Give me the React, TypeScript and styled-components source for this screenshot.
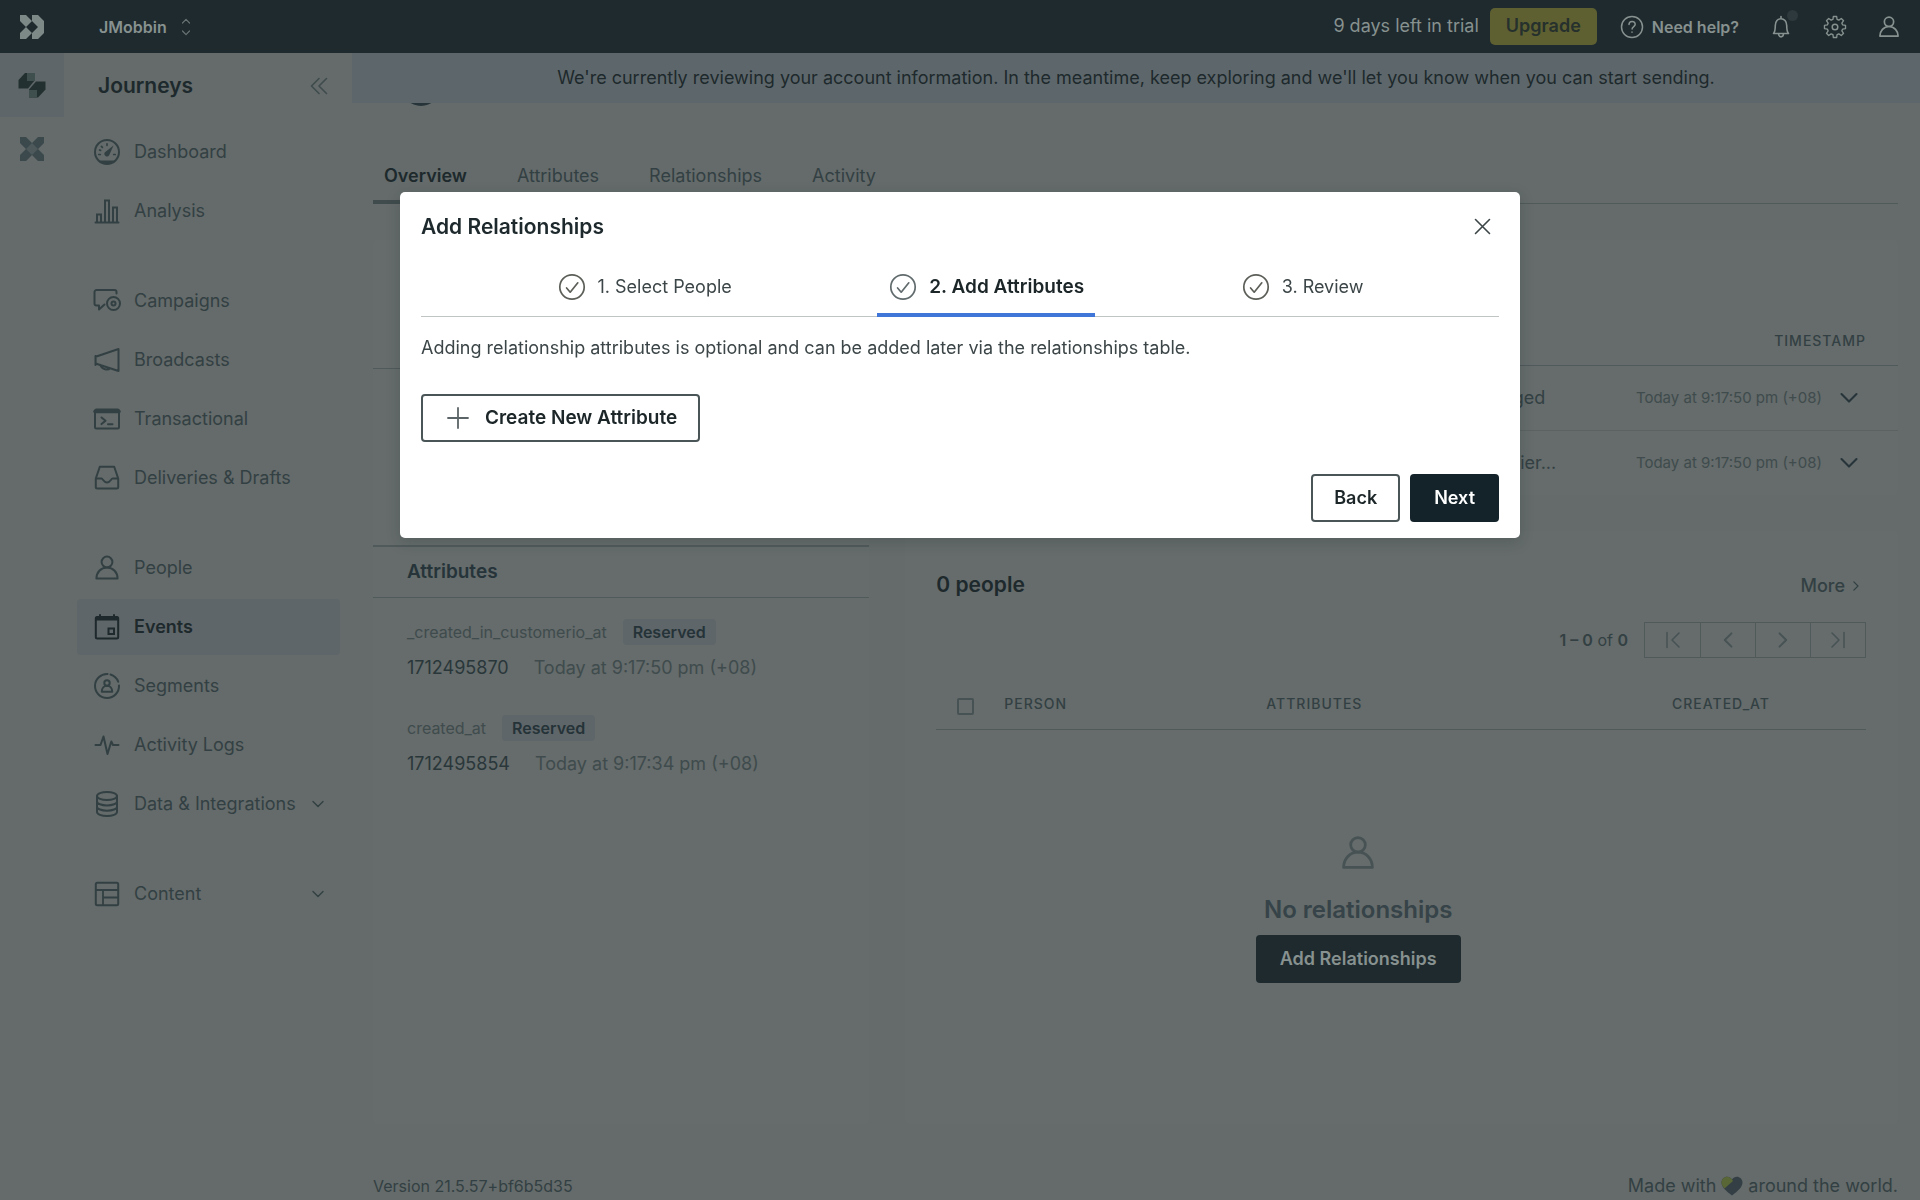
import React from "react";
import styled, { createGlobalStyle, css } from "styled-components";

const c = {
  page: "#646b6a",
  card: "#656c6b",
  selected: "#5f6669",
  banner: "#5d676b",
  bar: "#1e2a2e",
  barText: "#87918f",
  strong: "#1d292c",
  text: "#334043",
  muted: "#3f4b4d",
  faint: "#475254",
  line: "#515a5a",
  softLine: "#5b6362",
  ink: "#14232a",
  body: "#3c4547",
  blue: "#3f76d8",
};

const Global = createGlobalStyle`
  *, *::before, *::after { box-sizing: border-box; }
  body { margin: 0; background: ${c.page}; color: ${c.text};
    font-family: Inter, "Liberation Sans", sans-serif; font-size: 18px; line-height: 28px; }
  button { font: inherit; color: inherit; background: none; border: 0; padding: 0; margin: 0; }
  a { color: inherit; text-decoration: none; }
  h1, h2, h3, p, ul { margin: 0; padding: 0; }
  ul { list-style: none; }
  svg { display: block; flex: none; }
`;

const Svg = styled.svg`
  fill: none;
  stroke: currentColor;
  stroke-width: 2;
  stroke-linecap: round;
  stroke-linejoin: round;
`;

const PersonIcon = ({ size = 28, weight = 2 }: { size?: number; weight?: number }) => (
  <Svg width={size} height={size} viewBox="0 0 28 28" style={{ strokeWidth: weight }}>
    <circle cx="14" cy="8" r="5.4" />
    <path d="M3.4 24.6c0-6 4.4-11.200 10.600-11.200s10.600 5.200 10.600 11.200z" />
  </Svg>
);

const Chevron = ({ size = 12, turn = 0 }: { size?: number; turn?: number }) => (
  <Svg width={size} height={size} viewBox="0 0 12 12" style={{ strokeWidth: 1.4 }}>
    <path d="M1 3.400l5 5 5-5" transform={`rotate(${turn} 6 6)`} />
  </Svg>
);

const CheckIcon = () => (
  <Svg width="28" height="28" viewBox="0 0 28 28" style={{ strokeWidth: 1.7 }}>
    <circle cx="14" cy="14" r="12.200" />
    <path d="M8.600 15l3.600 4.200 7.600-9.400" />
  </Svg>
);

const glyphs: Record<string, React.ReactNode> = {
  dashboard: (
    <>
      <circle cx="14" cy="14" r="12" />
      <path d="M6 22.500h16c-2 2.400-5 3.500-8 3.500s-6-1.100-8-3.500z" fill="currentColor" stroke="none" />
      <path d="M20.500 7.500l-4.300 9.800a2.600 2.600 0 1 1-4.300-3z" fill="currentColor" stroke="none" />
      <path d="M14 5.800v1.500M8.400 8.400l1 1M5.800 16.500h1.500M20.700 16.500h1.500M6.600 12l1 .4" strokeWidth="1.700" />
    </>
  ),
  analysis: (
    <path
      d="M2.500 25.500h23M4 25.500v-8h4v8M12 25.500v-22h4v22M20 25.500v-15h4v15"
      strokeLinejoin="miter"
    />
  ),
  campaigns: (
    <>
      <path d="M23.500 6.500v-1.500a2 2 0 0 0-2-2h-18a2 2 0 0 0-2 2v11.500a2 2 0 0 0 2 2h2.500v4l5.500-5" />
      <circle cx="20.500" cy="16.500" r="6.500" />
      <circle cx="20.500" cy="16.500" r="2" />
    </>
  ),
  broadcasts: <path d="M25.500 3v22l-22.900-7.500v-6.800zM2.500 10v9M7.500 19.500c1.500 4.200 7.500 5 9.500 2.800" />,
  transactional: (
    <>
      <rect x="2" y="4.500" width="24" height="19" rx="1.500" />
      <path d="M2 6.500h24" strokeWidth="3.500" />
      <path d="M8.500 12.500l4 3.300-4 3.300M15 19.300h4.500" />
    </>
  ),
  drafts: (
    <path d="M2.800 14.500l4-11.700h14.400l4 11.700v8.500a1.500 1.500 0 0 1-1.500 1.500h-19.400a1.500 1.500 0 0 1-1.500-1.500zM2.800 14.500h5.700c1.300 0 2 4 5.500 4s4.200-4 5.500-4h5.700" />
  ),
  events: (
    <>
      <rect x="2.800" y="4" width="22.400" height="21.500" rx="1.500" />
      <path d="M2.800 5.500h22.400" strokeWidth="4" strokeLinecap="butt" />
      <path d="M7 2v3M21 2v3" />
      <rect x="15.500" y="15.500" width="5.500" height="5.500" strokeLinejoin="miter" />
    </>
  ),
  segments: (
    <>
      <path d="M14.500 2a12 12 0 1 0 11.500 11.500M17.500 2.500a12 12 0 0 1 7.700 7.200" />
      <circle cx="14" cy="11" r="2.700" />
      <path d="M8.800 19.800c0-3.500 2.200-6 5.200-6s5.200 2.500 5.200 6z" />
    </>
  ),
  activity: <path d="M2.500 14h5l3-8.500 4 17.500 3.800-12.500 1.700 3.500h5.500" />,
  data: (
    <>
      <ellipse cx="14" cy="6" rx="10" ry="4" />
      <path d="M4 6v16c0 2.200 4.500 4 10 4s10-1.800 10-4v-16M4 11.400c0 2.200 4.500 4 10 4s10-1.800 10-4M4 16.700c0 2.200 4.500 4 10 4s10-1.800 10-4" />
    </>
  ),
  content: (
    <>
      <rect x="2.800" y="2.800" width="22.400" height="22.400" rx="1.500" />
      <path d="M2.800 10h22.400M10 10v15M10 17.500h15" strokeWidth="1.800" />
    </>
  ),
};

const Glyph = ({ name }: { name: string }) =>
  name === "people" ? <PersonIcon /> : <Svg width="28" height="28" viewBox="0 0 28 28">{glyphs[name]}</Svg>;

/* ---------- shell ---------- */

const Shell = styled.div`
  min-height: 100vh;
  display: flex;
  flex-direction: column;
`;

const TopBar = styled.header`
  height: 53px;
  background: ${c.bar};
  color: ${c.barText};
  display: flex;
  align-items: center;
  justify-content: space-between;
  padding: 0 19px 0 20px;
`;

const Workspace = styled.button`
  display: flex;
  align-items: center;
  gap: 14px;
  font-size: 16px;
  font-weight: 600;
`;

const BarGroup = styled.div<{ $gap: number }>`
  display: flex;
  align-items: center;
  gap: ${(p) => p.$gap}px;
`;

const Trial = styled.div`
  display: flex;
  align-items: center;
  gap: 11px;
  span { padding-bottom: 2px; }
`;

const Upgrade = styled.button`
  height: 37px;
  padding: 0 16px 2px;
  border-radius: 5px;
  background: #5e6032;
  color: #26302c;
  font-size: 18px;
  font-weight: 600;
`;

const Help = styled.button`
  display: flex;
  align-items: center;
  gap: 8px;
  font-size: 16px;
  font-weight: 600;
`;

const IconButton = styled.button`
  position: relative;
  display: flex;
`;

const Dot = styled.span`
  position: absolute;
  top: -5px;
  right: -5px;
  width: 11px;
  height: 11px;
  border-radius: 50%;
  background: #2d393c;
`;

const Columns = styled.div`
  flex: 1;
  display: flex;
`;

const Rail = styled.nav`
  width: 64px;
  flex: none;
`;

const RailItem = styled.a<{ $active?: boolean }>`
  height: 64px;
  display: flex;
  align-items: center;
  justify-content: center;
  background: ${(p) => (p.$active ? c.selected : "transparent")};
`;

const Sidebar = styled.aside`
  width: 288px;
  flex: none;
  padding: 0 12px 0 13px;
`;

const SideHead = styled.div`
  height: 71px;
  padding: 4px 12px 9px 21px;
  display: flex;
  align-items: center;
  justify-content: space-between;
  color: ${c.muted};
`;

const Title = styled.h2`
  font-size: 21px;
  line-height: 32px;
  font-weight: 600;
  color: ${c.strong};
`;

const NavGroup = styled.ul`
  display: grid;
  gap: 3px;
  margin-bottom: 34px;
`;

const NavLink = styled.a<{ $active?: boolean }>`
  height: 56px;
  padding: 0 16px;
  display: flex;
  align-items: center;
  gap: 13px;
  border-radius: 4px;
  color: ${c.text};
  white-space: nowrap;
  ${(p) => p.$active && css`
    background: ${c.selected};
    color: ${c.strong};
    font-weight: 600;
  `}
  svg:last-child:not(:first-child) { margin-left: auto; }
`;

/* ---------- main ---------- */

const Main = styled.main`
  flex: 1;
  min-width: 0;
  display: flex;
  flex-direction: column;
`;

const Banner = styled.div`
  position: relative;
  z-index: 1;
  padding: 11px 20px;
  background: ${c.banner};
  color: ${c.strong};
  text-align: center;
`;

const Body = styled.div`
  flex: 1;
  display: flex;
  flex-direction: column;
  padding: 0 22px 0 21px;
`;

const Avatar = styled.div`
  width: 38px;
  height: 38px;
  margin: -35px 0 0 29px;
  border-radius: 50%;
  background: #27343a;
`;

const Tabs = styled.nav`
  display: flex;
  gap: 28px;
  margin-top: 40px;
  border-bottom: 1px solid ${c.line};
`;

const Tab = styled.a<{ $active?: boolean }>`
  padding: 16px 11px 10px;
  margin-bottom: -1px;
  border-bottom: 4px solid ${(p) => (p.$active ? "#3f4b4d" : "transparent")};
  color: ${(p) => (p.$active ? c.strong : c.text)};
  font-weight: ${(p) => (p.$active ? 600 : 400)};
`;

const Grid = styled.div`
  flex: 1;
  display: grid;
  grid-template-columns: 1fr 2fr;
  gap: 36px;
  margin-top: 36px;
`;

const Stack = styled.div`
  display: flex;
  flex-direction: column;
  gap: 36px;
`;

const Card = styled.section<{ $grow?: boolean }>`
  background: ${c.card};
  border-radius: 4px;
  flex: ${(p) => (p.$grow ? "1" : "none")};
`;

const Summary = styled.div`
  height: 129px;
  border-bottom: 1px solid ${c.line};
`;

const Details = styled.div`
  height: 178px;
  border-bottom: 2px solid ${c.line};
`;

const SectionTitle = styled.h3`
  padding: 11px 34px;
  border-bottom: 1px solid ${c.line};
  font-size: 19px;
  line-height: 28px;
  font-weight: 600;
  color: #26343a;
`;

const AttrList = styled.ul`
  display: grid;
  gap: 34px;
  padding: 21px 34px;
`;

const AttrName = styled.div`
  display: flex;
  align-items: center;
  gap: 16px;
  height: 26px;
  margin-bottom: 8px;
  font-size: 16px;
  color: ${c.muted};
`;

const Pill = styled.span`
  padding: 0 10px;
  border-radius: 4px;
  line-height: 26px;
  font-weight: 600;
  color: #253338;
  background: ${c.selected};
`;

const AttrValue = styled.div`
  display: flex;
  gap: 25px;
  padding-top: 1px;
  height: 28px;
  color: #2a373a;
  time { color: ${c.muted}; }
`;

const Table = styled.table`
  width: 100%;
  border-collapse: collapse;
  th {
    padding: 0;
    text-align: left;
    font-size: 14px;
    font-weight: 500;
    letter-spacing: 1px;
    color: ${c.text};
  }
  thead tr { border-bottom: 1px solid ${c.line}; }
`;

const ActivityTable = styled(Table)`
  margin-top: 78px;
  thead tr { height: 47px; }
  thead th:first-child { width: 48%; }
  thead th:last-child { text-align: right; padding-right: 32px; }
  tbody tr { height: 65px; }
  tbody tr + tr { border-top: 1px solid ${c.softLine}; }
  td { padding: 0 0 0 2px; white-space: nowrap; }
`;

const Stamp = styled.div`
  display: flex;
  align-items: center;
  justify-content: flex-end;
  gap: 18px;
  padding-right: 40px;
  font-size: 15px;
  color: ${c.muted};
  svg { color: #27343a; }
`;

const PeopleCard = styled(Card)`
  padding: 36px 32px 0 31px;
`;

const Row = styled.div`
  display: flex;
  align-items: center;
  justify-content: space-between;
  height: 36px;
`;

const More = styled.a`
  display: flex;
  align-items: center;
  gap: 6px;
  padding: 2px 5px 0 0;
  font-weight: 500;
`;

const Pager = styled.div`
  display: flex;
  justify-content: flex-end;
  align-items: center;
  gap: 16px;
  margin-top: 19px;
  font-size: 16px;
  b { font-weight: 600; }
`;

const PagerButtons = styled.div`
  display: flex;
  border: 1px solid ${c.line};
  button {
    width: 55px;
    height: 34px;
    display: flex;
    align-items: center;
    justify-content: center;
    color: ${c.faint};
  }
  button + button { border-left: 1px solid ${c.line}; }
`;

const PeopleTable = styled(Table)`
  margin-top: 21px;
  thead tr { height: 50px; }
  th:nth-child(1) { width: 68px; padding: 6px 0 0 21px; }
  th:nth-child(2) { width: 262px; }
  th:nth-child(4) { width: 194px; }
  input {
    appearance: none;
    display: block;
    width: 17px;
    height: 17px;
    margin: 0;
    border: 2px solid ${c.faint};
    border-radius: 2px;
  }
`;

const Empty = styled.div`
  display: flex;
  flex-direction: column;
  align-items: center;
  padding: 104px 86px 140px 0;
  color: ${c.faint};
`;

const EmptyTitle = styled.h3`
  margin: 22px 0 9px;
  font-size: 24px;
  line-height: 32px;
  font-weight: 600;
  color: #364348;
`;

const Footer = styled.footer`
  display: flex;
  justify-content: space-between;
  padding: 48px 0 0;
  small { font-size: 16px; }
  span { display: flex; gap: 5px; align-items: center; }
`;

const Button = styled.button<{ $kind: "dark" | "outline" | "dimmed" }>`
  height: 48px;
  padding: 0 24px;
  display: inline-flex;
  align-items: center;
  gap: 13px;
  border-radius: 4px;
  font-weight: 600;
  ${(p) => p.$kind === "dark" && css`background: ${c.ink}; color: #fff;`}
  ${(p) => p.$kind === "dimmed" && css`background: ${c.bar}; color: ${c.barText};`}
  ${(p) => p.$kind === "outline" && css`
    padding: 0 21px;
    border: 2px solid #4a5558;
    background: #fff;
    color: #1c2628;
  `}
  svg { color: #5b6466; }
`;

/* ---------- dialog ---------- */

const Overlay = styled.div`
  position: fixed;
  inset: 0;
  z-index: 2;
  display: flex;
  align-items: flex-start;
  justify-content: center;
  padding: 16vh 20px 0;
`;

const Dialog = styled.div`
  width: 100%;
  max-width: 1120px;
  padding: 16px 21px;
  border-radius: 5px;
  background: #fff;
  color: ${c.body};
  box-shadow: 0 4px 14px rgba(30, 42, 46, 0.22);
`;

const DialogHead = styled.div`
  display: flex;
  align-items: center;
  justify-content: space-between;
  height: 36px;
  padding: 1px 8px 0 0;
`;

const Steps = styled.ol`
  display: flex;
  justify-content: space-evenly;
  gap: 10px;
  margin: 12px 0 0;
  padding: 0;
  list-style: none;
  border-bottom: 1px solid #c0c4c5;
`;

const Step = styled.li<{ $active?: boolean }>`
  display: flex;
  align-items: center;
  gap: 12px;
  padding: 17px 11px 16px 12px;
  margin-bottom: -1px;
  ${(p) => p.$active && css`
    padding-bottom: 12px;
    border-bottom: 4px solid ${c.blue};
    color: #1c2628;
    font-size: 19px;
    font-weight: 600;
  `}
  svg { color: ${(p) => (p.$active ? "#616a6c" : "#5b5f58")}; }
`;

const Hint = styled.p`
  margin: 17px 0 32px;
`;

const Actions = styled.div`
  display: flex;
  justify-content: flex-end;
  gap: 10px;
  margin-top: 32px;
`;

const CreateButton = styled(Button)`
  font-size: 19px;
`;

type Item = [icon: string, label: string, opens?: boolean];

const groups: Item[][] = [
  [["dashboard", "Dashboard"], ["analysis", "Analysis"]],
  [["campaigns", "Campaigns"], ["broadcasts", "Broadcasts"], ["transactional", "Transactional"], ["drafts", "Deliveries & Drafts"]],
  [["people", "People"], ["events", "Events"], ["segments", "Segments"], ["activity", "Activity Logs"], ["data", "Data & Integrations", true]],
  [["content", "Content", true]],
];

const attributes = [
  { name: "_created_in_customerio_at", value: "1712495870", time: "Today at 9:17:50 pm (+08)" },
  { name: "created_at", value: "1712495854", time: "Today at 9:17:34 pm (+08)" },
];

const activity = ["Attributes changed", "Attribute: identifier..."];

export default function App() {
  return (
    <>
      <Global />
      <Shell>
        <TopBar>
          <BarGroup $gap={55}>
            <svg width="24" height="24" viewBox="0 0 24 24" fill="#7d8987">
              <path d="M0 0h6l6 6-6 6-6-6zM0 24h6l6-6-6-6-6 6z" />
              <path d="M12 0h6l6 6v12l-6 6h-6v-6l6-6-6-6z" />
            </svg>
            <Workspace>
              JMobbin
              <Svg width="10" height="18" viewBox="0 0 10 18" style={{ strokeWidth: 1.2 }} opacity=".7">
                <path d="M1.500 5l3.500-3.700 3.500 3.700M1.500 13l3.500 3.700 3.500-3.700" />
              </Svg>
            </Workspace>
          </BarGroup>
          <BarGroup $gap={23}>
            <Trial>
              <span>9 days left in trial</span>
              <Upgrade>Upgrade</Upgrade>
            </Trial>
            <BarGroup $gap={30}>
              <Help>
                <Svg width="24" height="24" viewBox="0 0 24 24" style={{ strokeWidth: 1.5 }}>
                  <circle cx="12" cy="12" r="10.500" />
                  <path d="M9 9.500c0-4 6.200-4 6.200-.2 0 2.200-3.100 2.300-3.100 4.700M12 17v.3" />
                </Svg>
                Need help?
              </Help>
              <IconButton aria-label="Notifications">
                <Svg width="24" height="24" viewBox="0 0 24 24" style={{ strokeWidth: 1.6 }}>
                  <path d="M4.500 18.500c1.800-2 1.800-4.500 1.800-8 0-4 2.500-6.800 5.700-6.800s5.700 2.800 5.700 6.800c0 3.500 0 6 1.800 8zM12 1.500v2M9.500 19c.4 3.800 4.600 3.800 5 0" />
                </Svg>
                <Dot />
              </IconButton>
              <IconButton aria-label="Settings">
                <Svg width="24" height="24" viewBox="0 0 24 24" style={{ strokeWidth: 1.5 }}>
                  <path
                    d="M10.200 1.300h3.600l.5 3.200 2 .9 2.700-1.900 2.500 2.500-1.900 2.700.9 2 3.200.5v3.600l-3.200.5-.9 2 1.900 2.700-2.500 2.500-2.700-1.900-2 .9-.5 3.200h-3.600l-.5-3.200-2-.9-2.700 1.900-2.500-2.500 1.900-2.700-.9-2-3.200-.5v-3.600l3.200-.5.9-2-1.900-2.700 2.500-2.500 2.700 1.900 2-.9z"
                    transform="translate(1.200 .3) scale(.9)"
                  />
                  <circle cx="12" cy="12" r="2.800" />
                </Svg>
              </IconButton>
              <IconButton aria-label="Account">
                <PersonIcon size={24} />
              </IconButton>
            </BarGroup>
          </BarGroup>
        </TopBar>

        <Columns>
          <Rail aria-label="Products">
            <RailItem href="#" $active aria-label="Journeys">
              <svg width="28" height="26" viewBox="0 0 28 26">
                <path d="M7 1h10v7l-7 8.500h-9.500v-8.500z" fill="#22312f" />
                <path d="M9 1h8v8h-8z" fill="#3e4f4d" />
                <path d="M18 9.500h9.500v8l-7.500 8h-9v-8z" fill="#22312f" />
                <path d="M11 18h8v7.500h-8z" fill="#3e4f4d" />
              </svg>
            </RailItem>
            <RailItem href="#" aria-label="Data pipelines">
              <svg width="24" height="24" viewBox="0 0 24 24" fill="#3b494c">
                <path d="M0 0h6l6 6 6-6h6v6l-6 6 6 6v6h-6l-6-6-6 6h-6v-6l6-6-6-6z" />
                <path d="M12 6l6 6-6 6-6-6z" fill="#4d595b" />
              </svg>
            </RailItem>
          </Rail>

          <Sidebar>
            <SideHead>
              <Title>Journeys</Title>
              <IconButton aria-label="Collapse sidebar">
                <Svg width="18" height="18" viewBox="0 0 18 18" style={{ strokeWidth: 1.6 }}>
                  <path d="M9 1.500l-7.500 7.500 7.500 7.500M16.500 1.500l-7.500 7.500 7.500 7.500" />
                </Svg>
              </IconButton>
            </SideHead>
            <nav>
              {groups.map((items) => (
                <NavGroup key={items[0][1]}>
                  {items.map(([icon, label, opens]) => (
                    <li key={label}>
                      <NavLink href="#" $active={label === "Events"}>
                        <Glyph name={icon} />
                        <span>{label}</span>
                        {opens && <Chevron />}
                      </NavLink>
                    </li>
                  ))}
                </NavGroup>
              ))}
            </nav>
          </Sidebar>

          <Main>
            <Banner>
              We're currently reviewing your account information. In the meantime, keep exploring and we'll let you know
              when you can start sending.
            </Banner>
            <Body>
              <Avatar />
              <Tabs>
                <Tab href="#" $active>Overview</Tab>
                <Tab href="#">Attributes</Tab>
                <Tab href="#">Relationships</Tab>
                <Tab href="#">Activity</Tab>
              </Tabs>

              <Grid>
                <Card>
                  <Summary />
                  <Details />
                  <SectionTitle>Attributes</SectionTitle>
                  <AttrList>
                    {attributes.map((a) => (
                      <li key={a.name}>
                        <AttrName>
                          {a.name}
                          <Pill>Reserved</Pill>
                        </AttrName>
                        <AttrValue>
                          <span>{a.value}</span>
                          <time>{a.time}</time>
                        </AttrValue>
                      </li>
                    ))}
                  </AttrList>
                </Card>

                <Stack>
                  <Card>
                    <ActivityTable>
                      <thead>
                        <tr>
                          <th />
                          <th />
                          <th scope="col">TIMESTAMP</th>
                        </tr>
                      </thead>
                      <tbody>
                        {activity.map((name) => (
                          <tr key={name}>
                            <td />
                            <td>{name}</td>
                            <td>
                              <Stamp>
                                <time>Today at 9:17:50 pm (+08)</time>
                                <Chevron size={18} />
                              </Stamp>
                            </td>
                          </tr>
                        ))}
                      </tbody>
                    </ActivityTable>
                  </Card>

                  <PeopleCard $grow>
                    <Row>
                      <Title>0 people</Title>
                      <More href="#">
                        More
                        <Chevron size={10} turn={-90} />
                      </More>
                    </Row>
                    <Pager>
                      <span><b>1 – 0</b> of <b>0</b></span>
                      <PagerButtons>
                        <button aria-label="First page">
                          <Svg width="18" height="18" viewBox="0 0 18 18" style={{ strokeWidth: 1.5 }}>
                            <path d="M3 1.500v15M15 2l-7 7 7 7" />
                          </Svg>
                        </button>
                        <button aria-label="Previous page"><Chevron size={16} turn={90} /></button>
                        <button aria-label="Next page"><Chevron size={16} turn={-90} /></button>
                        <button aria-label="Last page">
                          <Svg width="18" height="18" viewBox="0 0 18 18" style={{ strokeWidth: 1.5 }}>
                            <path d="M15 1.500v15M3 2l7 7-7 7" />
                          </Svg>
                        </button>
                      </PagerButtons>
                    </Pager>
                    <PeopleTable>
                      <thead>
                        <tr>
                          <th><input type="checkbox" aria-label="Select all people" /></th>
                          <th scope="col">PERSON</th>
                          <th scope="col">ATTRIBUTES</th>
                          <th scope="col">CREATED_AT</th>
                        </tr>
                      </thead>
                    </PeopleTable>
                    <Empty>
                      <PersonIcon size={38} />
                      <EmptyTitle>No relationships</EmptyTitle>
                      <Button $kind="dimmed">Add Relationships</Button>
                    </Empty>
                  </PeopleCard>
                </Stack>
              </Grid>

              <Footer>
                <small>Version 21.5.57+bf6b5d35</small>
                <span>
                  Made with
                  <svg width="22" height="20" viewBox="0 0 22 20">
                    <path d="M11 19.500c-6-4.500-10.500-8.500-10.500-13 0-6 7.500-8 10.500-3 3-5 10.500-3 10.500 3 0 4.500-4.500 8.500-10.500 13z" fill="#343f45" />
                    <path d="M3.500 12.500c-2-2-3-4-3-6 0-6 7.500-8 10.500-3l1 1.500z" fill="#596636" />
                  </svg>
                  around the world.
                </span>
              </Footer>
            </Body>
          </Main>
        </Columns>
      </Shell>

      <Overlay>
        <Dialog role="dialog" aria-modal="true" aria-labelledby="dialog-title">
          <DialogHead>
            <Title id="dialog-title">Add Relationships</Title>
            <IconButton aria-label="Close">
              <Svg width="17" height="17" viewBox="0 0 17 17" style={{ strokeWidth: 1.6 }}>
                <path d="M1.500 1.500l14 14M15.500 1.500l-14 14" />
              </Svg>
            </IconButton>
          </DialogHead>
          <Steps>
            <Step><CheckIcon />1. Select People</Step>
            <Step $active><CheckIcon />2. Add Attributes</Step>
            <Step><CheckIcon />3. Review</Step>
          </Steps>
          <Hint>Adding relationship attributes is optional and can be added later via the relationships table.</Hint>
          <CreateButton $kind="outline">
            <Svg width="28" height="28" viewBox="0 0 28 28" style={{ strokeWidth: 1.8 }}>
              <path d="M14 4v20M4 14h20" />
            </Svg>
            Create New Attribute
          </CreateButton>
          <Actions>
            <Button $kind="outline">Back</Button>
            <Button $kind="dark">Next</Button>
          </Actions>
        </Dialog>
      </Overlay>
    </>
  );
}
